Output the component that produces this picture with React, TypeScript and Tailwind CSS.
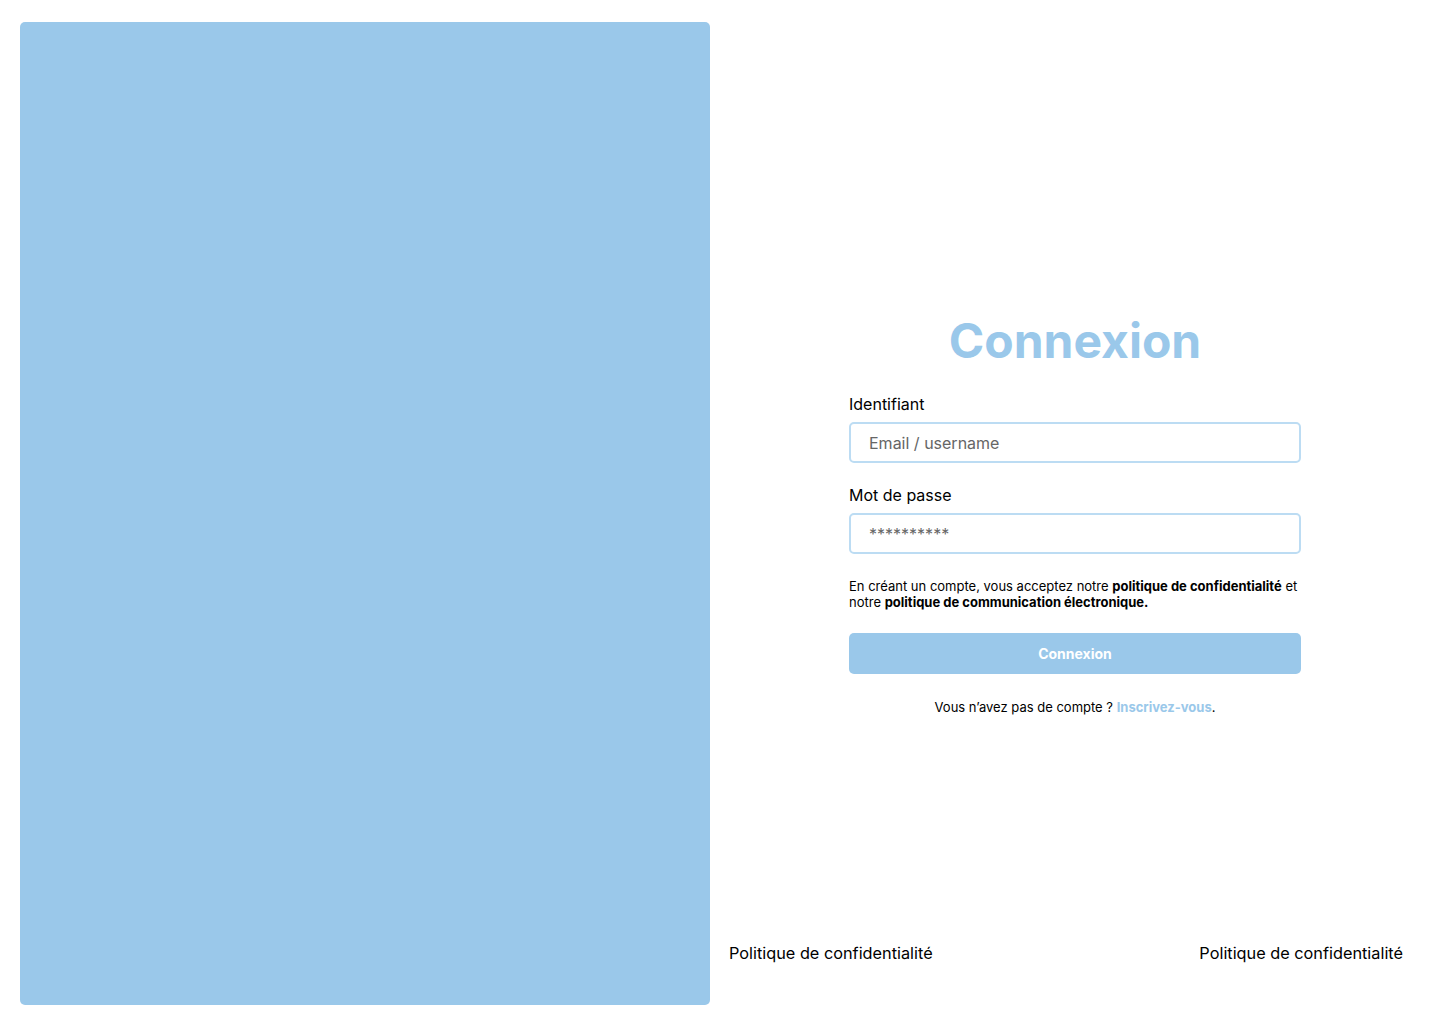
export default function App() {
    return (
        <div className="flex h-[1024px] w-[1440px] bg-white pt-[22px] pb-[19px] pl-[20px] font-['Inter',sans-serif] text-black">
            <div className="w-[690px] shrink-0 rounded-[5px] bg-[#9AC8EA]" />

            <div className="flex flex-1 flex-col">
                <div className="flex flex-1 justify-center pt-[290px]">
                    <form className="w-[452px]" onSubmit={(e) => e.preventDefault()}>
                        <h1 className="mb-[24px] text-center text-[48px] leading-[58px] font-bold text-[#9AC8EA]">Connexion</h1>

                        <div className="mb-[22px] flex flex-col">
                            <label htmlFor="login" className="mb-[8px] text-[16px] leading-[20px]">Identifiant</label>
                            <input
                                type="text"
                                id="login"
                                placeholder="Email / username"
                                className="h-[41px] w-full rounded-[5px] border-2 border-[#BCDCF3] px-[18px] text-[16px] outline-none placeholder:text-[#666666]" />
                        </div>

                        <div className="mb-[24px] flex flex-col">
                            <label htmlFor="password" className="mb-[8px] text-[16px] leading-[20px]">Mot de passe</label>
                            <input
                                type="text"
                                id="password"
                                placeholder="**********"
                                className="h-[41px] w-full rounded-[5px] border-2 border-[#BCDCF3] px-[18px] text-[16px] outline-none placeholder:text-[#666666]" />
                        </div>

                        <p className="mb-[23px] text-[13px] leading-[16px]">
                            En créant un compte, vous acceptez notre <b>politique de confidentialité</b> et notre <b>politique de communication électronique.</b>
                        </p>

                        <button type="submit" className="h-[41px] w-full rounded-[5px] bg-[#9AC8EA] text-[14px] font-bold text-white">Connexion</button>

                        <p className="mt-[25px] text-center text-[13px] leading-[16px]">
                            Vous n’avez pas de compte ? <a href="#" className="font-bold text-[#9AC8EA]">Inscrivez-vous</a>.
                        </p>
                    </form>
                </div>

                <div className="flex justify-between pl-[19px] pr-[37px] pb-[42px] text-[16.3px] leading-[20px]">
                    <span>Politique de confidentialité</span>
                    <span>Politique de confidentialité</span>
                </div>
            </div>
        </div>
    )
}
